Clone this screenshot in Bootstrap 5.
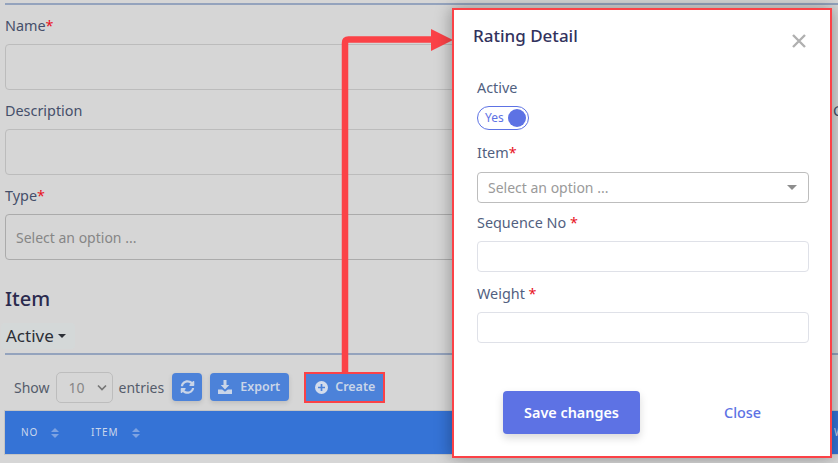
<!doctype html>
<html lang="en"><head><meta charset="utf-8">
<link href="https://cdn.jsdelivr.net/npm/bootstrap@5.3.0/dist/css/bootstrap.min.css" rel="stylesheet">
<style>
html,body{height:100%;}
body{font-family:"Noto Sans","Open Sans",sans-serif;background:#d6d6d6;color:#4d5469;font-size:14px;overflow:hidden;position:relative;width:838px;height:463px;}
.stage{padding:3px 0 0 5px;width:838px;height:463px;overflow:hidden;}
.rule{height:2px;background:#94a3bd;width:900px;}
.flabel{font-size:14.4px;line-height:20px;color:#454f6a;margin:0;}
.flabel-first{margin-top:11px;}
.req{color:#e8101c;}
.field-a{height:46px;width:800px;border:1px solid #bcbcbc;border-radius:4px;margin-top:8px;margin-bottom:11px;}
.field-a.tall{font-size:14px;color:#868686;padding:0 10px;margin-bottom:0;display:flex;align-items:center;border-color:#ababab;}
.sec-title{font-size:20px;line-height:28px;font-weight:500;color:#2a2a4e;margin:25px 0 10px;}
.chip{display:flex;width:fit-content;align-items:center;gap:4px;margin-left:-4px;padding:0 9px 0 5px;height:26px;background:#d4d8d8;border-radius:4px;font-size:17px;color:#2c2f36;}
.caret{width:0;height:0;border-left:4px solid transparent;border-right:4px solid transparent;border-top:4px solid #2c2f36;}
.rule2{margin-top:4px;}
.toolrow{height:30px;margin-top:17px;padding-left:9px;width:600px;font-size:14px;color:#555c6b;}
.lensel{width:57px;height:31px;border:1px solid #bdbdbd;border-radius:5px;display:flex;align-items:center;justify-content:space-between;padding:0 5px 0 12px;color:#868686;margin:0 6px 0 6px;}
.tbtn{background:#4c82d9;color:#c9d5e8;border-radius:4px;height:28px;font-size:12.5px;font-weight:600;display:flex;align-items:center;box-shadow:0 2px 5px rgba(0,0,0,.12);}
.tb-r{width:30px;justify-content:center;margin-left:8px;}
.tb-e{width:79px;padding-left:8px;gap:8px;margin-left:8px;}
.tb-c{width:81px;height:31px;padding-left:9px;gap:7px;margin-left:15px;border:2px solid #fb4247;border-radius:0;box-shadow:none;}
.thead-bar{background:#3573d6;height:43px;width:900px;margin-top:9px;display:flex;align-items:center;color:#cbd7ec;font-size:10px;letter-spacing:1px;position:relative;box-shadow:0 0 0 1px #c4c4c4;}
.th1{margin-left:16px;display:flex;gap:13px;align-items:center;width:70px;}
.th2{display:flex;gap:13px;align-items:center;}
.th3{position:absolute;left:829px;}
.side{position:absolute;left:826px;top:101px;font-size:14.4px;line-height:20px;color:#454f6a;padding-left:7px;}
.dialog{position:absolute;left:452px;top:8px;width:380px;height:450px;background:#fff;border:2px solid #fb4247;box-shadow:-4px 0 14px rgba(0,0,0,.18),4px 0 14px rgba(0,0,0,.18);padding:0 21px 0 23px;}
.dlg-title{font-size:17px;line-height:22px;font-weight:500;color:#32325d;margin:0;}
.dlg-head{padding-top:15px;position:relative;height:68px;margin-left:-4px;}
.xbtn{position:absolute;right:3px;top:24px;width:14px;height:14px;background:none;border:0;padding:0;line-height:0;}
.mlabel{font-size:14.4px;line-height:20px;color:#525f7f;margin:0;}
.toggle{width:52px;height:24px;border:1px solid #5d72e4;border-radius:12px;margin:8px 0 13px;display:flex;align-items:center;justify-content:space-between;padding:0 2px 0 7px;font-size:12px;color:#5d72e4;}
.knob{width:18px;height:18px;border-radius:50%;background:#5d72e4;}
.msel{height:31px;border:1px solid #bdbdbd;border-radius:4px;margin:9px 0 10px;display:flex;align-items:center;justify-content:space-between;padding:0 11px 0 10px;color:#9a9a9a;font-size:14px;}
.tri{width:0;height:0;border-left:5px solid transparent;border-right:5px solid transparent;border-top:5px solid #8d8d8d;}
.minput{height:31px;border:1px solid #dfe1e8;border-radius:4px;margin-top:8px;margin-bottom:12px;}
.footrow{margin-top:48px;margin-left:26px;}
.btn.save{background:#5d72e4;border:0;color:#fff;font-size:14.4px;font-weight:600;width:137px;height:43px;border-radius:4px;box-shadow:0 4px 8px rgba(0,0,0,.15);padding:0;}
.btn.closeb{background:none;border:0;color:#5d72e4;font-size:14.4px;font-weight:500;padding:0;width:37px;height:43px;margin-left:84px;}
.arrow{position:absolute;left:0;top:0;pointer-events:none;}
</style></head><body>
<div class="stage">
  <div class="rule"></div>
  <p class="flabel flabel-first">Name<span class="req">*</span></p>
  <div class="field-a"></div>
  <p class="flabel">Description</p>
  <div class="field-a"></div>
  <p class="flabel">Type<span class="req">*</span></p>
  <div class="field-a tall">Select an option ...</div>
  <h2 class="sec-title">Item</h2>
  <div class="chip">Active<span class="caret"></span></div>
  <div class="rule rule2"></div>
  <div class="toolrow d-flex align-items-center">
    <span>Show</span>
    <div class="lensel"><span>10</span><svg width="10" height="7" viewBox="0 0 10 7"><path d="M1 1.500l4 4 4-4" fill="none" stroke="#777" stroke-width="1.700"/></svg></div>
    <span>entries</span>
    <div class="tbtn tb-r"><svg width="15" height="14" viewBox="0 0 512 512" fill="#c9d5e8"><path d="M370.7 133.3C339.5 104 298.9 88 255.800 88c-77.500 0-144.400 53.100-162.900 126.900-1.300 5.400-6.100 9.100-11.600 9.100H24.100c-7.500 0-13.200-6.800-11.800-14.200C33.900 94.900 134.800 8 256 8c66.400 0 126.800 26.100 171.300 68.700L463 41c15.100-15.100 41-4.400 41 17v134c0 13.300-10.700 24-24 24H346c-21.400 0-32.100-25.900-17-41zM32 296h134c21.400 0 32.100 25.900 17 41l-41.800 41.800c31.300 29.300 71.800 45.300 115 45.200 77.400-.1 144.300-53.100 162.800-126.800 1.300-5.400 6.100-9.100 11.600-9.100h57.300c7.500 0 13.200 6.800 11.800 14.200C478.100 417.100 377.200 504 256 504c-66.400 0-126.800-26.100-171.300-68.700L49 471c-15.100 15.100-41 4.400-41-17V320c0-13.300 10.700-24 24-24z"/></svg></div>
    <div class="tbtn tb-e"><svg width="14" height="14" viewBox="0 0 14 14" fill="#c9d5e8"><path d="M5.500 0h3v5h2.800L7 9.500 2.700 5h2.800z"/><path d="M0 9.500h4.200L7 11.800l2.800-2.300H14V14H0z"/></svg><span>Export</span></div>
    <div class="tbtn tb-c"><svg width="13" height="13" viewBox="0 0 13 13"><circle cx="6.500" cy="6.500" r="6.500" fill="#d3dcec"/><path d="M6.500 3v7M3 6.500h7" stroke="#4c82d9" stroke-width="1.700"/></svg><span>Create</span></div>
  </div>
  <div class="thead-bar">
    <div class="th1"><span>NO</span><svg width="8" height="10" viewBox="0 0 8 10" fill="#7ea3e2"><path d="M4 0l4 4H0zM4 10L0 6h8z"/></svg></div>
    <div class="th2"><span>ITEM</span><svg width="8" height="10" viewBox="0 0 8 10" fill="#7ea3e2"><path d="M4 0l4 4H0zM4 10L0 6h8z"/></svg></div>
    <span class="th3">WEIGHT</span>
  </div>
</div>
<div class="side">Code</div>
<svg class="arrow" width="460" height="380" viewBox="0 0 460 380"><path d="M345 372V43q0-3.500 3.500-3.500H433" fill="none" stroke="#fb4247" stroke-width="6.500"/><path d="M431 29l22 11-22 11z" fill="#fb4247"/></svg>
<div class="dialog">
  <div class="dlg-head"><h5 class="dlg-title">Rating Detail</h5>
    <button class="xbtn" aria-label="Close"><svg width="14" height="14" viewBox="0 0 14 14"><path d="M1 1l12 12M13 1L1 13" stroke="#b0b0b0" stroke-width="2.400"/></svg></button></div>
  <p class="mlabel">Active</p>
  <div class="toggle"><span>Yes</span><span class="knob"></span></div>
  <p class="mlabel">Item<span class="req">*</span></p>
  <div class="msel"><span>Select an option ...</span><span class="tri"></span></div>
  <p class="mlabel">Sequence No <span class="req">*</span></p>
  <div class="minput"></div>
  <p class="mlabel">Weight <span class="req">*</span></p>
  <div class="minput"></div>
  <div class="d-flex footrow"><button class="btn save">Save changes</button><button class="btn closeb">Close</button></div>
</div>
</body></html>
